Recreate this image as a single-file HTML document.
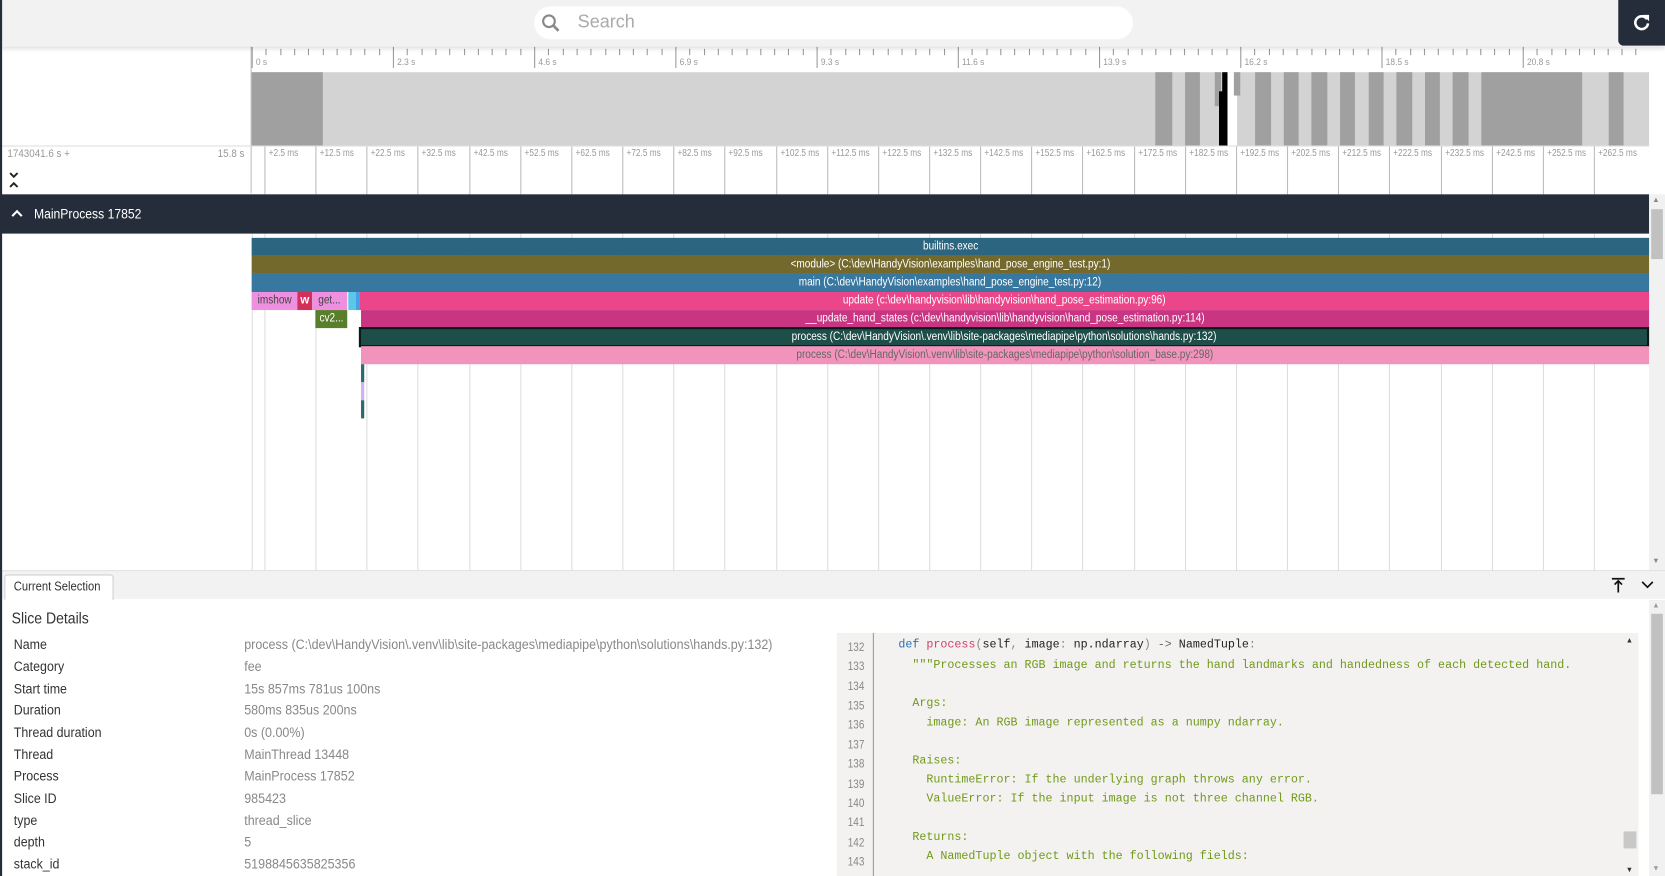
<!DOCTYPE html>
<html><head><meta charset="utf-8"><style>
*{margin:0;padding:0;box-sizing:border-box}
html,body{width:1665px;height:876px;overflow:hidden;background:#fff}
#w{position:absolute;left:0;top:0;width:1568px;height:825px;transform:scale(1.06186);transform-origin:0 0;font-family:"Liberation Sans",sans-serif;overflow:hidden}
.a{position:absolute}
.n{transform:scaleX(.88);transform-origin:0 0;white-space:nowrap}
.s{position:absolute;height:17px;color:#fff;font-size:11px;line-height:17px;text-align:center;white-space:nowrap;overflow:hidden}
.s span{display:inline-block;transform:scaleX(.86);transform-origin:50% 50%}
.gl{position:absolute;width:1px;background:#ddd}
.tl{position:absolute;top:139px;font-size:9.5px;color:#999;transform:scaleX(.82);transform-origin:0 0;white-space:nowrap}
.lab{position:absolute;left:13px;font-size:13px;color:#333;transform:scaleX(.9);transform-origin:0 0;white-space:nowrap}
.val{position:absolute;left:230px;font-size:13px;color:#888;transform:scaleX(.905);transform-origin:0 0;white-space:nowrap}
.ln{position:absolute;left:792px;width:22px;text-align:right;font-size:11px;color:#888;transform:scaleX(.85);transform-origin:100% 0}
.cd{position:absolute;left:846px;font-family:"Liberation Mono",monospace;font-size:11px;color:#6f9a1a;white-space:pre}
</style></head><body><div id="w">
<div class="a" style="left:0;top:0;width:2px;height:825px;background:#252d3a;z-index:5"></div>
<div class="a" style="left:0;top:0;width:1568px;height:44px;background:#f2f2f2;box-shadow:0 2px 4px rgba(0,0,0,.12);z-index:3"></div>
<div class="a" style="left:503px;top:6px;width:564px;height:31px;background:#fff;border-radius:16px;z-index:4"></div>
<svg class="a" style="left:509px;top:12px;z-index:4" width="20" height="20" viewBox="0 0 20 20"><circle cx="8" cy="8" r="5.5" stroke="#888" stroke-width="2" fill="none"/><path d="M12 12 L17 17" stroke="#888" stroke-width="2.5"/></svg>
<div class="a" style="left:544px;top:11px;font-size:17px;color:#aaa;z-index:4">Search</div>
<div class="a" style="left:1524px;top:0;width:44px;height:43px;background:#252d3a;border-bottom-left-radius:5px;z-index:4"></div>
<svg class="a" style="left:1537px;top:12px;z-index:5" width="18" height="18" viewBox="0 0 18 18"><path d="M14 6 A6 6 0 1 0 15 10" stroke="#fff" stroke-width="2.4" fill="none"/><path d="M10 2 L16 2 L16 8 Z" fill="#fff"/></svg>
<div class="a" style="left:236px;top:44px;width:1px;height:138px;background:#bbb"></div>
<div id="ticks"></div>
<div class="a" style="left:0;top:137px;width:1553px;height:1px;background:#ddd"></div>
<div class="a" style="left:237px;top:68px;width:1316px;height:69px;background:#d3d3d3"></div>
<div class="a" style="left:237px;top:68px;width:67px;height:69px;background:#a0a0a0"></div>
<div id="ov"></div>
<div class="a n" style="left:7px;top:139px;font-size:10.5px;color:#999">1743041.6 s +</div>
<div class="a n" style="left:205px;top:139px;font-size:10.5px;color:#999">15.8 s</div>
<svg class="a" style="left:8px;top:161px" width="10" height="18"><path d="M1.5 2 L5 5.5 L8.5 2" stroke="#222" stroke-width="1.8" fill="none"/><path d="M1.5 15 L5 11.5 L8.5 15" stroke="#222" stroke-width="1.8" fill="none"/></svg>
<div id="grid"></div>
<div class="a" style="left:0;top:183px;width:1553px;height:37px;background:#252d3a"></div>
<svg class="a" style="left:10px;top:196px" width="12" height="10"><path d="M1.5 7.5 L6 3 L10.5 7.5" stroke="#fff" stroke-width="2" fill="none"/></svg>
<div class="a n" style="left:32px;top:194px;font-size:13px;color:#fff">MainProcess 17852</div>
<div class="a" style="left:1553px;top:183px;width:15px;height:354px;background:#f1f1f1"></div>
<div class="a" style="left:1555px;top:197px;width:11px;height:47px;background:#c1c1c1"></div>
<div class="a" style="left:1556px;top:185px;font-size:7px;color:#888">&#9650;</div>
<div class="a" style="left:1556px;top:525px;font-size:7px;color:#888">&#9660;</div>
<div class="s" style="left:237px;top:224px;width:1316px;background:#2c6580"><span>builtins.exec</span></div>
<div class="s" style="left:237px;top:241px;width:1316px;background:#74692c"><span>&lt;module&gt; (C:\dev\HandyVision\examples\hand_pose_engine_test.py:1)</span></div>
<div class="s" style="left:237px;top:258px;width:1316px;background:#3878a0"><span>main (C:\dev\HandyVision\examples\hand_pose_engine_test.py:12)</span></div>
<div class="s" style="left:237px;top:275px;width:43px;background:#ef8fe0;color:#444"><span>imshow</span></div>
<div class="s" style="left:280px;top:275px;width:14px;background:#d0305a;font-weight:bold">w</div>
<div class="s" style="left:294px;top:275px;width:33px;background:#ef8fe0;color:#444"><span>get...</span></div>
<div class="s" style="left:328px;top:275px;width:7px;background:#5bc8e8"></div>
<div class="s" style="left:335px;top:275px;width:4px;background:#4a9de8"></div>
<div class="s" style="left:339px;top:275px;width:1214px;background:#ea4689"><span>update (c:\dev\handyvision\lib\handyvision\hand_pose_estimation.py:96)</span></div>
<div class="s" style="left:297px;top:292px;width:30px;background:#5a7f2c"><span>cv2...</span></div>
<div class="s" style="left:340px;top:292px;width:1213px;background:#c93582"><span>__update_hand_states (c:\dev\handyvision\lib\handyvision\hand_pose_estimation.py:114)</span></div>
<div class="s" style="left:338px;top:308px;width:1215px;height:19px;background:#1e4e4a;border:2px solid #0a1a1a;line-height:15px"><span>process (C:\dev\HandyVision\.venv\lib\site-packages\mediapipe\python\solutions\hands.py:132)</span></div>
<div class="s" style="left:340px;top:326px;width:1213px;background:#f193bb;color:#666"><span>process (C:\dev\HandyVision\.venv\lib\site-packages\mediapipe\python\solution_base.py:298)</span></div>
<div class="s" style="left:340px;top:343px;width:3px;background:#2c6a70"></div>
<div class="s" style="left:340px;top:360px;width:3px;background:#d0b0f0"></div>
<div class="s" style="left:340px;top:377px;width:3px;background:#2c6a70"></div>
<div class="a" style="left:0;top:537px;width:1568px;height:1px;background:#ddd"></div>
<div class="a" style="left:0;top:538px;width:1568px;height:26px;background:#f2f2f2"></div>
<div class="a" style="left:4px;top:541px;width:103px;height:24px;background:#fff;border:1px solid #ccc;border-bottom:none;border-radius:3px 3px 0 0"></div>
<div class="a n" style="left:13px;top:545px;font-size:12px;color:#333">Current Selection</div>
<svg class="a" style="left:1517px;top:543px" width="14" height="16"><path d="M1 2 H13" stroke="#111" stroke-width="1.6"/><path d="M7 15 V4 M3.5 7.5 L7 4 L10.5 7.5" stroke="#111" stroke-width="1.6" fill="none"/></svg>
<svg class="a" style="left:1545px;top:546px" width="13" height="9"><path d="M1.5 2 L6.5 7 L11.5 2" stroke="#111" stroke-width="1.6" fill="none"/></svg>
<div class="a n" style="left:11px;top:574px;font-size:15px;color:#333">Slice Details</div>
<div class="lab" style="top:599px">Name</div><div class="val" style="top:599px">process (C:\dev\HandyVision\.venv\lib\site-packages\mediapipe\python\solutions\hands.py:132)</div>
<div class="lab" style="top:620px">Category</div><div class="val" style="top:620px">fee</div>
<div class="lab" style="top:641px">Start time</div><div class="val" style="top:641px">15s 857ms 781us 100ns</div>
<div class="lab" style="top:661px">Duration</div><div class="val" style="top:661px">580ms 835us 200ns</div>
<div class="lab" style="top:682px">Thread duration</div><div class="val" style="top:682px">0s (0.00%)</div>
<div class="lab" style="top:703px">Thread</div><div class="val" style="top:703px">MainThread 13448</div>
<div class="lab" style="top:723px">Process</div><div class="val" style="top:723px">MainProcess 17852</div>
<div class="lab" style="top:744px">Slice ID</div><div class="val" style="top:744px">985423</div>
<div class="lab" style="top:765px">type</div><div class="val" style="top:765px">thread_slice</div>
<div class="lab" style="top:785px">depth</div><div class="val" style="top:785px">5</div>
<div class="lab" style="top:806px">stack_id</div><div class="val" style="top:806px">5198845635825356</div>
<div class="a" style="left:788px;top:596px;width:755px;height:229px;background:#f4f2f0"></div>
<div class="a" style="left:822px;top:596px;width:1px;height:229px;background:#999"></div>
<div class="a" style="left:1531px;top:600px;font-size:7px;color:#333">&#9650;</div>
<div class="a" style="left:1529px;top:783px;width:12px;height:16px;background:#c8c8c8"></div>
<div class="a" style="left:1531px;top:816px;font-size:7px;color:#333">&#9660;</div>
<div class="ln" style="top:604px">132</div><div class="ln" style="top:622px">133</div><div class="ln" style="top:641px">134</div><div class="ln" style="top:659px">135</div><div class="ln" style="top:677px">136</div><div class="ln" style="top:696px">137</div><div class="ln" style="top:714px">138</div><div class="ln" style="top:733px">139</div><div class="ln" style="top:751px">140</div><div class="ln" style="top:769px">141</div><div class="ln" style="top:788px">142</div><div class="ln" style="top:806px">143</div>
<div class="cd" style="top:602px;color:#222"><span style="color:#2a6fb0">def</span> <span style="color:#d04070">process</span><span style="color:#888">(</span>self<span style="color:#888">,</span> image<span style="color:#888">:</span> np.ndarray<span style="color:#888">)</span> <span style="color:#666">-&gt;</span> NamedTuple<span style="color:#888">:</span></div>
<div class="cd" style="top:621px">  """Processes an RGB image and returns the hand landmarks and handedness of each detected hand.</div>
<div class="cd" style="top:657px">  Args:</div>
<div class="cd" style="top:675px">    image: An RGB image represented as a numpy ndarray.</div>
<div class="cd" style="top:711px">  Raises:</div>
<div class="cd" style="top:729px">    RuntimeError: If the underlying graph throws any error.</div>
<div class="cd" style="top:747px">    ValueError: If the input image is not three channel RGB.</div>
<div class="cd" style="top:783px">  Returns:</div>
<div class="cd" style="top:801px">    A NamedTuple object with the following fields:</div>
<div class="a" style="left:1553px;top:565px;width:15px;height:260px;background:#f1f1f1"></div>
<div class="a" style="left:1555px;top:578px;width:11px;height:170px;background:#c1c1c1"></div>
<div class="a" style="left:1556px;top:567px;font-size:7px;color:#999">&#9650;</div>
<div class="a" style="left:1556px;top:815px;font-size:7px;color:#999">&#9660;</div>
</div>
<script>
var h='';
for(var i=0;i<=100;i++){var x=237+i*13.3;if(x>1553)break;var maj=i%10==0;h+='<div class="a" style="left:'+x.toFixed(1)+'px;top:'+(maj?44:46)+'px;width:1px;height:'+(maj?20:6)+'px;background:#999"></div>';}
var L=['0 s','2.3 s','4.6 s','6.9 s','9.3 s','11.6 s','13.9 s','16.2 s','18.5 s','20.8 s'];
for(var i=0;i<L.length;i++)h+='<div class="a n" style="left:'+(241+i*133)+'px;top:53px;font-size:9px;color:#999">'+L[i]+'</div>';
document.getElementById('ticks').innerHTML=h;
h='';
var S=[[1088,16],[1116,14],[1144,6,'#a0a0a0',32],[1148,8,'#000',0,18],[1151,5,'#000'],[1156,9,'#fff'],[1162,6,'#a0a0a0',22],[1182,15],[1209,14],[1235,15],[1262,14],[1289,14],[1315,15],[1342,14],[1368,15],[1395,95],[1515,14]];
S.forEach(function(s){var t=68,hh=69;if(s[3]){hh=s[3]}if(s[4]){t=68+s[4];hh=69-s[4]}h+='<div class="a" style="left:'+s[0]+'px;top:'+t+'px;width:'+s[1]+'px;height:'+hh+'px;background:'+(s[2]||'#a0a0a0')+'"></div>';});
document.getElementById('ov').innerHTML=h;
h='';
for(var k=0;k<27;k++){var x=249+k*48.15;h+='<div class="gl" style="left:'+x.toFixed(1)+'px;top:138px;height:45px;background:#bbb"></div><div class="gl" style="left:'+x.toFixed(1)+'px;top:220px;height:317px"></div><div class="tl" style="left:'+(x+4).toFixed(1)+'px">+'+(2.5+10*k)+' ms</div>';}
h+='<div class="gl" style="left:237px;top:220px;height:317px"></div>';
document.getElementById('grid').innerHTML=h;
</script>
</body></html>
